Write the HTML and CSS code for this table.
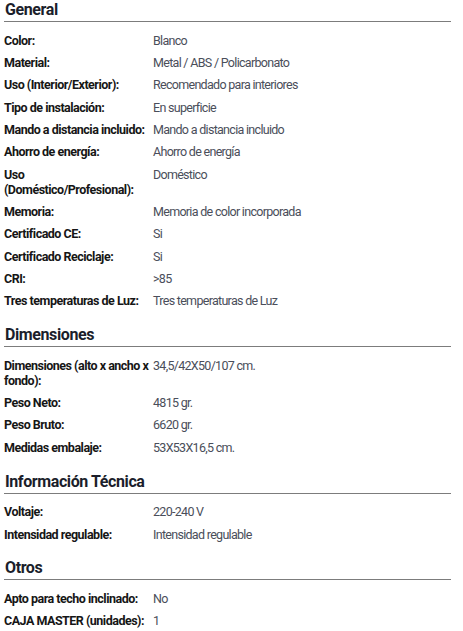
FILE: index.html
```html
<!DOCTYPE html>
<html lang="es">
<head>
<meta charset="utf-8">
<title>Especificaciones</title>
<link rel="stylesheet" href="styles.css">
</head>
<body>
<div class="specs-page">
  <section class="group">
    <h2 class="group-title">General</h2>
    <dl class="specs">
      <div class="row"><dt>Color:</dt><dd>Blanco</dd></div>
      <div class="row"><dt>Material:</dt><dd>Metal / ABS / Policarbonato</dd></div>
      <div class="row"><dt>Uso (Interior/Exterior):</dt><dd>Recomendado para interiores</dd></div>
      <div class="row"><dt>Tipo de instalación:</dt><dd>En superficie</dd></div>
      <div class="row"><dt>Mando a distancia incluido:</dt><dd>Mando a distancia incluido</dd></div>
      <div class="row"><dt>Ahorro de energía:</dt><dd>Ahorro de energía</dd></div>
      <div class="row"><dt>Uso (Doméstico/Profesional):</dt><dd>Doméstico</dd></div>
      <div class="row"><dt>Memoria:</dt><dd>Memoria de color incorporada</dd></div>
      <div class="row"><dt>Certificado CE:</dt><dd>Si</dd></div>
      <div class="row"><dt>Certificado Reciclaje:</dt><dd>Si</dd></div>
      <div class="row"><dt>CRI:</dt><dd>&gt;85</dd></div>
      <div class="row"><dt>Tres temperaturas de Luz:</dt><dd>Tres temperaturas de Luz</dd></div>
    </dl>
  </section>
  <section class="group">
    <h2 class="group-title">Dimensiones</h2>
    <dl class="specs">
      <div class="row"><dt>Dimensiones (alto x ancho x fondo):</dt><dd>34,5/42X50/107 cm.</dd></div>
      <div class="row"><dt>Peso Neto:</dt><dd>4815 gr.</dd></div>
      <div class="row"><dt>Peso Bruto:</dt><dd>6620 gr.</dd></div>
      <div class="row"><dt>Medidas embalaje:</dt><dd>53X53X16,5 cm.</dd></div>
    </dl>
  </section>
  <section class="group">
    <h2 class="group-title">Información Técnica</h2>
    <dl class="specs">
      <div class="row"><dt>Voltaje:</dt><dd>220-240 V</dd></div>
      <div class="row"><dt>Intensidad regulable:</dt><dd>Intensidad regulable</dd></div>
    </dl>
  </section>
  <section class="group">
    <h2 class="group-title">Otros</h2>
    <dl class="specs">
      <div class="row"><dt>Apto para techo inclinado:</dt><dd>No</dd></div>
      <div class="row"><dt>CAJA MASTER (unidades):</dt><dd>1</dd></div>
    </dl>
  </section>
</div>
</body>
</html>
```
FILE: styles.css
```css
html, body {
  margin: 0;
  padding: 0;
  background: #ffffff;
}

body {
  font-family: Roboto, "Noto Sans", sans-serif;
  color: #1a1a1a;
}

.specs-page {
  padding: 0 12px 0 4px;
  display: flex;
  flex-direction: column;
  gap: 13px;
}

.group-title {
  margin: 0;
  font-size: 16px;
  font-weight: 700;
  line-height: 20px;
  padding: 0 0 1px 1px;
  color: #1b1e2b;
  letter-spacing: -0.4px;
  border-bottom: 1px solid #7c7c7c;
}

.specs {
  margin: 7px 0 0;
  display: flex;
  flex-direction: column;
}

.row {
  display: grid;
  grid-template-columns: 149px 1fr;
  padding: 3.68px 0;
  font-size: 12.5px;
  line-height: 15px;
}

.row dt {
  margin: 0;
  font-weight: 700;
  color: #161616;
  padding-right: 4px;
  letter-spacing: -0.5px;
}

.row dd {
  margin: 0;
  font-weight: 400;
  color: #4a4e5a;
  letter-spacing: -0.7px;
}
```
